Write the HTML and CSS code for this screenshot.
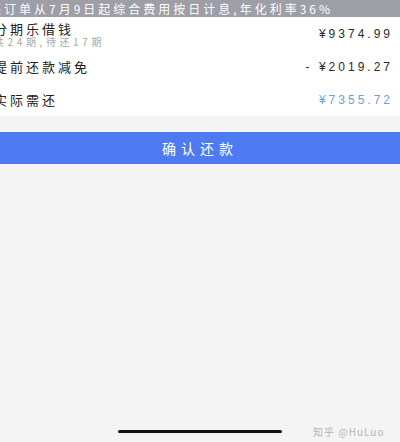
FILE: index.html
```html
<!DOCTYPE html>
<html lang="zh">
<head>
<meta charset="utf-8">
<title>确认还款</title>
<link rel="stylesheet" href="styles.css">
</head>
<body>
<div class="page">
  <div class="notice"><span class="notice-text">还订单从7月9日起综合费用按日计息,年化利率36%</span></div>
  <div class="card">
    <div class="row row-first">
      <div class="label">
        <div class="title">分期乐借钱</div>
        <div class="sub">共24期,待还17期</div>
      </div>
      <div class="amount">¥9374.99</div>
    </div>
    <div class="row">
      <div class="title">提前还款减免</div>
      <div class="amount">- ¥2019.27</div>
    </div>
    <div class="row row-last">
      <div class="title">实际需还</div>
      <div class="amount blue">¥7355.72</div>
    </div>
  </div>
  <div class="button">确认还款</div>
  <div class="footer">
    <div class="home-bar"></div>
    <div class="watermark">知乎 @HuLuo</div>
  </div>
</div>
</body>
</html>
```
FILE: styles.css
```css
* { box-sizing: border-box; margin: 0; padding: 0; }
html, body { width: 400px; height: 442px; overflow: hidden; }
body {
  background: #f4f4f4;
  font-family: "Noto Sans CJK SC", "Liberation Sans", sans-serif;
}
.page {
  height: 442px;
  display: flex;
  flex-direction: column;
}
.notice {
  height: 17px;
  background: #9d9ea6;
  color: #ffffff;
  font-size: 12px;
  line-height: 17px;
  letter-spacing: 3px;
  white-space: nowrap;
  overflow: hidden;
}
.notice-text { display: inline-block; margin-left: -11px; }
.card {
  background: #ffffff;
  display: flex;
  flex-direction: column;
}
.row {
  height: 34px;
  display: flex;
  align-items: center;
  justify-content: space-between;
  padding: 0 10px 0 0;
}
.row-first { height: 33px; }
.row-last { height: 32px; }
.label { display: flex; flex-direction: column; padding-top: 1px; }
.title {
  margin-left: -6px;
  font-size: 13px;
  line-height: 14px;
  letter-spacing: 3px;
  color: #222222;
}
.sub {
  margin-left: -6px;
  font-size: 10px;
  line-height: 11px;
  letter-spacing: 3.6px;
  color: #a8a8a8;
}
.amount {
  font-family: "Liberation Sans", sans-serif;
  font-size: 12px;
  letter-spacing: 3px;
  color: #2a2a2a;
  margin-right: -3px;
}
.amount.blue { color: #6a9fe0; }
.button {
  margin-top: 16px;
  height: 32px;
  background: #4f7bf2;
  color: #ffffff;
  font-size: 14px;
  line-height: 32px;
  letter-spacing: 5px;
  text-align: center;
}
.footer {
  margin-top: auto;
  height: 13px;
  position: relative;
}
.home-bar {
  width: 164px;
  height: 3px;
  border-radius: 2px;
  background: #111111;
  margin: 1px auto 0;
}
.watermark {
  position: absolute;
  left: 313px;
  top: -5px;
  font-size: 10px;
  color: #b4b4b4;
  letter-spacing: 1px;
  white-space: nowrap;
}
```
